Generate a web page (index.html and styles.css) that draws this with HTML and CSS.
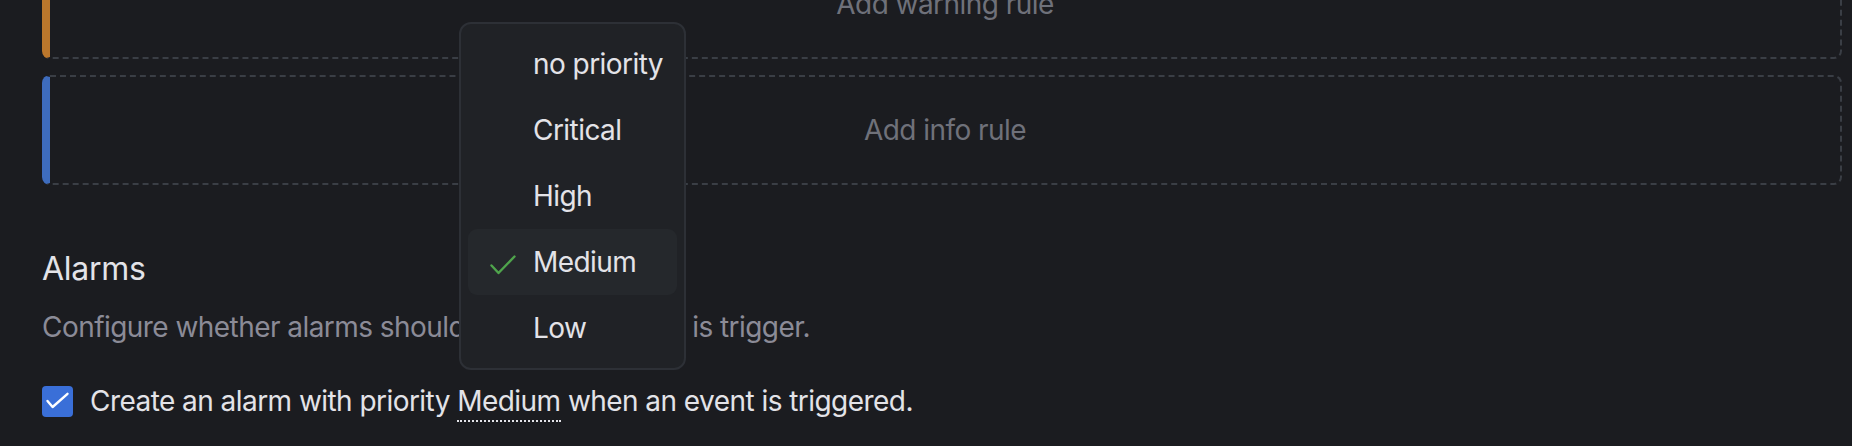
FILE: index.html
```html
<!DOCTYPE html>
<html lang="en">
<head>
    <meta charset="UTF-8">
    <meta name="viewport" content="width=device-width, initial-scale=1.0">
    <title>Alert rule settings</title>
    <link rel="stylesheet" href="styles.css">
</head>
<body>
    <div class="page">
        <!-- severity rules -->
        <div class="rule rule-warning">Add warning rule</div>
        <div class="rule rule-info">Add info rule</div>

        <!-- alarms -->
        <h4 class="section-title">Alarms</h4>
        <p class="section-desc">Configure whether alarms should be created if this is trigger.</p>
        <label class="check-row">
            <span class="checkbox">
                <svg width="31" height="31" viewBox="0 0 31 31"><polyline points="5.5,15 10.6,21 25.5,7.8" /></svg>
            </span>
            <span class="check-label">Create an alarm with priority <span class="priority">Medium</span> when an event is triggered.</span>
        </label>
    </div>

    <!-- priority picker, open -->
    <div class="menu">
        <div class="menu-item"><span class="menu-check"></span>no priority</div>
        <div class="menu-item"><span class="menu-check"></span>Critical</div>
        <div class="menu-item"><span class="menu-check"></span>High</div>
        <div class="menu-item selected">
            <span class="menu-check"><svg width="26" height="20" viewBox="0 0 26 20"><polyline points="1.5,10.5 8.5,18 24.5,1.5" /></svg></span>Medium
        </div>
        <div class="menu-item"><span class="menu-check"></span>Low</div>
    </div>
</body>
</html>
```

FILE: styles.css
```css
body {
    margin: 0;
    background-color: #1b1c20;
    color: #e3e3e8;
    font-family: Inter, "Noto Sans", sans-serif;
    font-size: 28px;
    letter-spacing: -0.55px;
}
.page {
    margin-top: -51px;
    padding: 0 10px 10px 42px;
}
.rule {
    height: 110px;
    box-sizing: border-box;
    border: 2px dashed #3a3e45;
    border-radius: 8px;
    display: flex;
    align-items: center;
    justify-content: center;
    color: #6f717a;
}
.rule + .rule {
    margin-top: 16px;
}
.rule-warning {
    border-left: 8px solid #bb772c;
}
.rule-info {
    border-left: 8px solid #3e6cbd;
}
.section-title {
    margin: 64px 0 0;
    font-size: 32px;
    font-weight: 400;
    line-height: 40px;
    letter-spacing: -0.3px;
}
.section-desc {
    margin: 17px 0 0;
    line-height: 42px;
    color: #8b8b97;
}
.check-row {
    margin-top: 32px;
    display: flex;
    align-items: center;
    gap: 17px;
    height: 42px;
}
.check-label {
    line-height: 42px;
}
.checkbox {
    width: 31px;
    height: 31px;
    border-radius: 4px;
    background-color: #3a6fd8;
    display: flex;
}
.checkbox polyline {
    fill: none;
    stroke: #fff;
    stroke-width: 2.4;
    stroke-linecap: round;
    stroke-linejoin: round;
}
.priority {
    display: inline-block;
    line-height: 38px;
    border-bottom: 2px dotted #e3e3e8;
}
.menu {
    position: absolute;
    left: 459px;
    top: 22px;
    width: 227px;
    box-sizing: border-box;
    padding: 7px;
    background-color: #202226;
    border: 2px solid #2d3036;
    border-radius: 12px;
}
.menu-item {
    height: 66px;
    display: flex;
    align-items: center;
    gap: 17px;
    padding-left: 22px;
    border-radius: 9px;
}
.menu-item.selected {
    background-color: #25282c;
}
.menu-check {
    width: 26px;
    height: 20px;
    margin-top: 5px;
    display: flex;
}
.menu-check polyline {
    fill: none;
    stroke: #4fa44c;
    stroke-width: 2.4;
    stroke-linecap: round;
    stroke-linejoin: round;
}
```
